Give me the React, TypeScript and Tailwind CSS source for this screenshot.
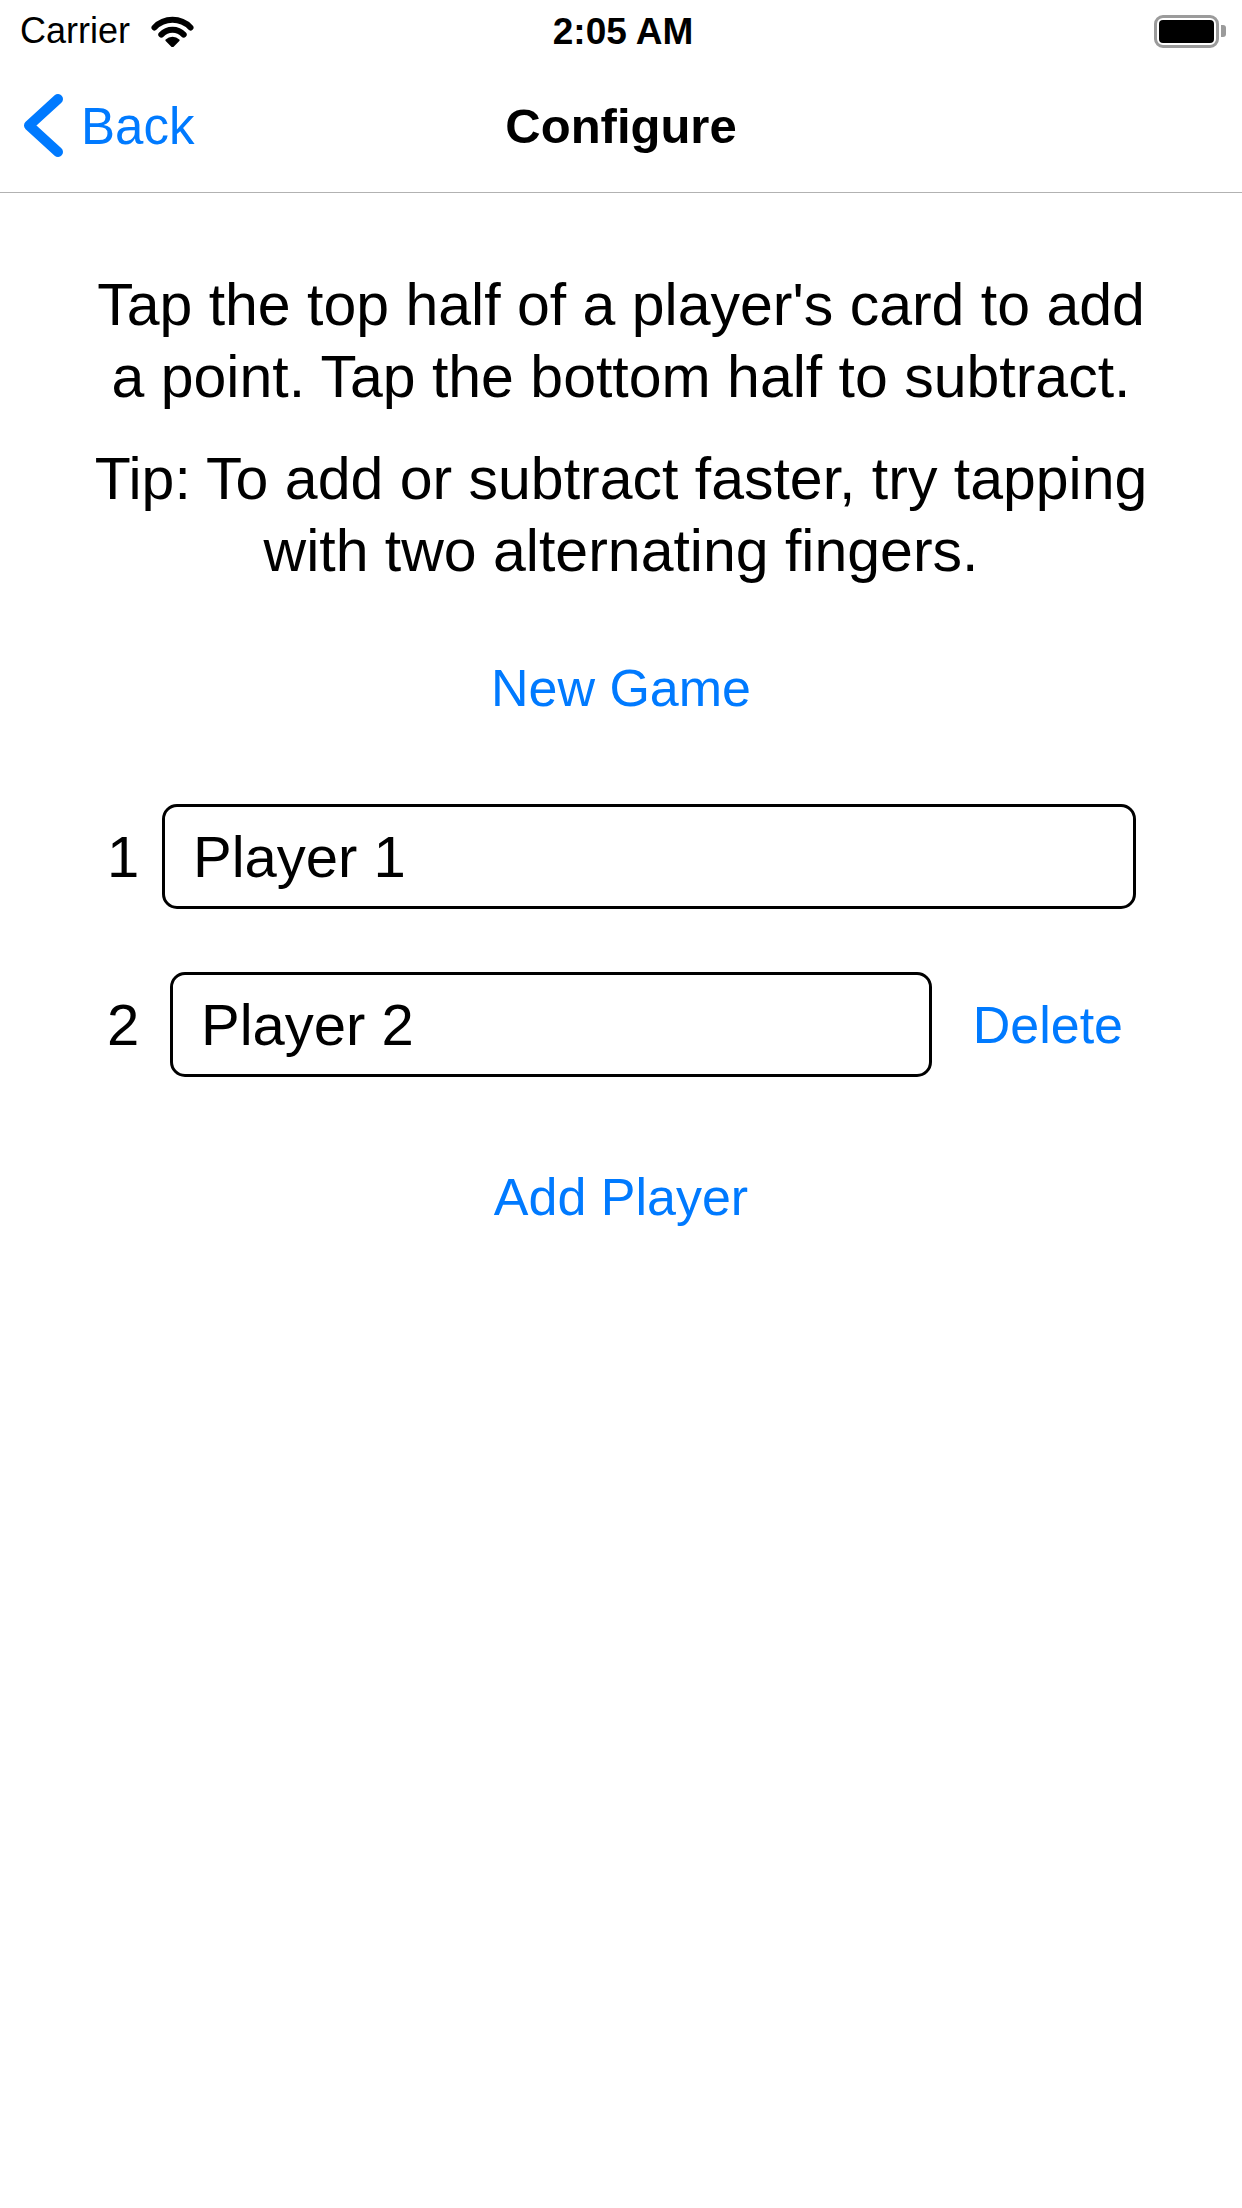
import React from "react";

function Wifi() {
  return (
    <svg width="45" height="32" viewBox="0 0 45 32" className="block">
      <path d="M4.5 12.5 A25 25 0 0 1 40.5 12.5" fill="none" stroke="#000" strokeWidth="6" strokeLinecap="round" />
      <path d="M11.3 19.6 A15.5 15.5 0 0 1 33.7 19.6" fill="none" stroke="#000" strokeWidth="6" strokeLinecap="round" />
      <path d="M22.5 31.5 L16.4 25.2 A8.6 8.6 0 0 1 28.6 25.2 Z" fill="#000" stroke="#000" strokeWidth="2" strokeLinejoin="round" />
    </svg>
  );
}

function Battery() {
  return (
    <div className="flex items-center">
      <div className="w-[65px] h-[33px] border-[3px] border-[#9b9b9b] rounded-[9px] p-[2px]">
        <div className="w-full h-full bg-black rounded-[4px]" />
      </div>
      <div className="w-[5px] h-[12px] bg-[#9b9b9b] rounded-r-[3px] ml-[2px]" />
    </div>
  );
}

function Chevron() {
  return (
    <svg width="44" height="66" viewBox="0 0 44 66" className="block">
      <path d="M37 6 L8 32.5 L37 59" fill="none" stroke="#007aff" strokeWidth="10" strokeLinecap="round" strokeLinejoin="round" />
    </svg>
  );
}

const players = [
  { n: "1", name: "Player 1", labelW: "w-[55px]", del: false },
  { n: "2", name: "Player 2", labelW: "w-[63px]", del: true },
];

export default function App() {
  return (
    <div className="min-h-[2208px] w-[1242px] bg-white text-black font-['Liberation_Sans',Arial,sans-serif]">
      {/* Status bar */}
      <div className="h-[60px] grid grid-cols-[1fr_auto_1fr] items-center pr-[16px] pl-[20px] pt-[2px]">
        <div className="flex items-center gap-[20px]">
          <span className="text-[36px] leading-none">Carrier</span>
          <Wifi />
        </div>
        <div className="text-[37px] font-bold leading-none">2:05 AM</div>
        <div className="flex justify-end">
          <Battery />
        </div>
      </div>

      {/* Nav bar */}
      <div className="h-[133px] border-b border-[#b2b2b2] grid grid-cols-[1fr_auto_1fr] items-center">
        <div className="flex items-center pl-[21px] gap-[16px]">
          <Chevron />
          <span className="text-[51px] text-[#007aff] leading-none">Back</span>
        </div>
        <div className="text-[49px] font-bold leading-none">Configure</div>
        <div />
      </div>

      {/* Content */}
      <div className="flex flex-col items-center pt-[76px]">
        <p className="text-[59px] leading-[72px] text-center whitespace-nowrap">
          Tap the top half of a player's card to add
          <br />
          a point. Tap the bottom half to subtract.
        </p>
        <p className="mt-[30px] text-[59px] leading-[72px] text-center whitespace-nowrap">
          Tip: To add or subtract faster, try tapping
          <br />
          with two alternating fingers.
        </p>
        <button className="mt-[70px] text-[52px] leading-[62px] text-[#007aff]">New Game</button>
      </div>

      <div className="flex flex-col gap-[63px] mt-[85px] pl-[107px] pr-[106px]">
        {players.map((p) => (
          <div key={p.n} className="flex items-center">
            <span className={`${p.labelW} text-[58px] leading-none`}>{p.n}</span>
            <div className="flex-1 h-[105px] border-[3px] border-black rounded-[15px] flex items-center pl-[28px]">
              <input
                readOnly
                defaultValue={p.name}
                className="w-full bg-transparent outline-none text-[58px] leading-none text-black"
              />
            </div>
            {p.del && (
              <button className="ml-[41px] mr-[13px] text-[52px] leading-none text-[#007aff]">Delete</button>
            )}
          </div>
        ))}
      </div>

      <div className="flex justify-center mt-[89px]">
        <button className="text-[52px] leading-[62px] text-[#007aff]">Add Player</button>
      </div>
    </div>
  );
}
